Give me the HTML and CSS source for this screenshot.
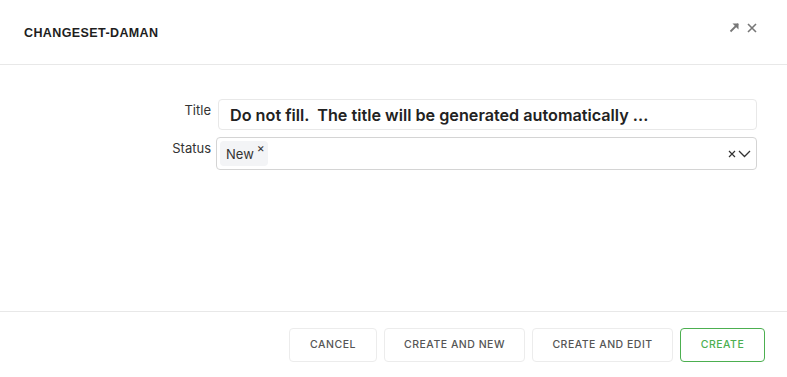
FILE: index.html
```html
<!DOCTYPE html>
<html lang="en">
<head>
  <meta charset="UTF-8" />
  <meta name="viewport" content="width=device-width, initial-scale=1.0" />
  <title>Changeset</title>
  <link rel="stylesheet" href="styles.css">
</head>
<body>
  <div class="modal">
    <header class="modal-header">
      <h1>CHANGESET-DAMAN</h1>
      <div class="header-tools">
        <!-- expand -->
        <svg width="11" height="11" viewBox="0 0 11 11" aria-hidden="true">
          <path d="M1.5 9.5 L9 2" stroke="#777" stroke-width="1.8" fill="none"/>
          <path d="M3.5 1.5 H9.5 V7.5 Z" fill="#777"/>
        </svg>
        <!-- close -->
        <svg width="10" height="10" viewBox="0 0 10 10" aria-hidden="true">
          <path d="M1 1 L9 9 M9 1 L1 9" stroke="#777" stroke-width="1.6" fill="none"/>
        </svg>
      </div>
    </header>

    <main class="modal-body">
      <div class="form-row">
        <label class="form-label" for="title">Title</label>
        <input class="title-input" id="title" type="text" value="Do not fill.  The title will be generated automatically ...">
      </div>
      <div class="form-row">
        <label class="form-label">Status</label>
        <div class="select-box">
          <span class="tag">New<span class="tag-remove">&times;</span></span>
          <div class="select-tools">
            <svg width="8" height="8" viewBox="0 0 8 8" aria-hidden="true">
              <path d="M1 1 L7 7 M7 1 L1 7" stroke="#333" stroke-width="1.2" fill="none"/>
            </svg>
            <svg width="13" height="8" viewBox="0 0 13 8" aria-hidden="true">
              <path d="M1 1 L6.5 6.5 L12 1" stroke="#333" stroke-width="1.3" fill="none"/>
            </svg>
          </div>
        </div>
      </div>
    </main>

    <footer class="modal-footer">
      <button class="btn">CANCEL</button>
      <button class="btn btn-wide">CREATE AND NEW</button>
      <button class="btn btn-wide">CREATE AND EDIT</button>
      <button class="btn btn-primary">CREATE</button>
    </footer>
  </div>
</body>
</html>
```

FILE: styles.css
```css
:root {
  --border-light: #e8e8e8;
  --input-border: #d4d4d4;
  --text-dark: #222;
  --text-muted: #555;
  --green: #4caf50;
}

* {
  margin: 0;
  padding: 0;
  box-sizing: border-box;
}

body {
  font-family: Inter, "Noto Sans", sans-serif;
  background: #fff;
  color: var(--text-dark);
  width: 787px;
  height: 377px;
  overflow: hidden;
}

.modal {
  display: flex;
  flex-direction: column;
  height: 377px;
}

.modal-header {
  height: 65px;
  padding: 0 30px 0 24px;
  display: flex;
  align-items: center;
  justify-content: space-between;
  border-bottom: 1px solid var(--border-light);
}

.modal-header h1 {
  font-family: "Liberation Sans", Arial, sans-serif;
  font-size: 12.5px;
  font-weight: 700;
  letter-spacing: 0.4px;
  color: #1e1e1e;
  margin-top: 1px;
}

.header-tools {
  display: flex;
  align-items: center;
  gap: 7px;
  margin-top: -9px;
}

.modal-body {
  flex: 1;
  padding: 34px 30px 0 0;
  display: flex;
  flex-direction: column;
  gap: 7px;
}

.form-row {
  display: flex;
  align-items: flex-start;
}

.form-label {
  width: 211px;
  text-align: right;
  font-size: 13px;
  color: #333;
  padding-top: 3px;
  flex-shrink: 0;
}

.title-input {
  flex: 1;
  margin-left: 7px;
  height: 31px;
  border: 1px solid var(--border-light);
  border-radius: 4px;
  padding: 0 11px;
  font-family: Inter, "Noto Sans", sans-serif;
  font-size: 16.2px;
  font-weight: 600;
  color: var(--text-dark);
  outline: none;
  white-space: pre;
}

.select-box {
  flex: 1;
  margin-left: 5px;
  height: 33px;
  border: 1px solid var(--input-border);
  border-radius: 4px;
  padding: 3px 5px 3px 3px;
  display: flex;
  align-items: center;
  justify-content: space-between;
}

.tag {
  display: flex;
  align-items: flex-start;
  height: 25px;
  width: 48px;
  background: #f3f4f6;
  border-radius: 4px;
  padding: 5px 0 0 6px;
  font-size: 13px;
  color: #333;
}

.tag-remove {
  font-size: 12px;
  line-height: 1;
  margin: -4px 0 0 3px;
  color: #333;
}

.select-tools {
  display: flex;
  align-items: center;
  gap: 2px;
}

.modal-footer {
  height: 66px;
  border-top: 1px solid var(--border-light);
  display: flex;
  justify-content: flex-end;
  align-items: center;
  gap: 7px;
  padding: 0 22px 0 0;
}

.btn {
  height: 34px;
  width: 88px;
  background: #fff;
  border: 1px solid #ececec;
  border-radius: 4px;
  font-family: Inter, "Noto Sans", sans-serif;
  font-size: 10.5px;
  font-weight: 500;
  letter-spacing: 0.5px;
  color: var(--text-muted);
}

.btn-wide {
  width: 141px;
}

.btn-primary {
  width: 85px;
  border-color: var(--green);
  color: var(--green);
}
```
